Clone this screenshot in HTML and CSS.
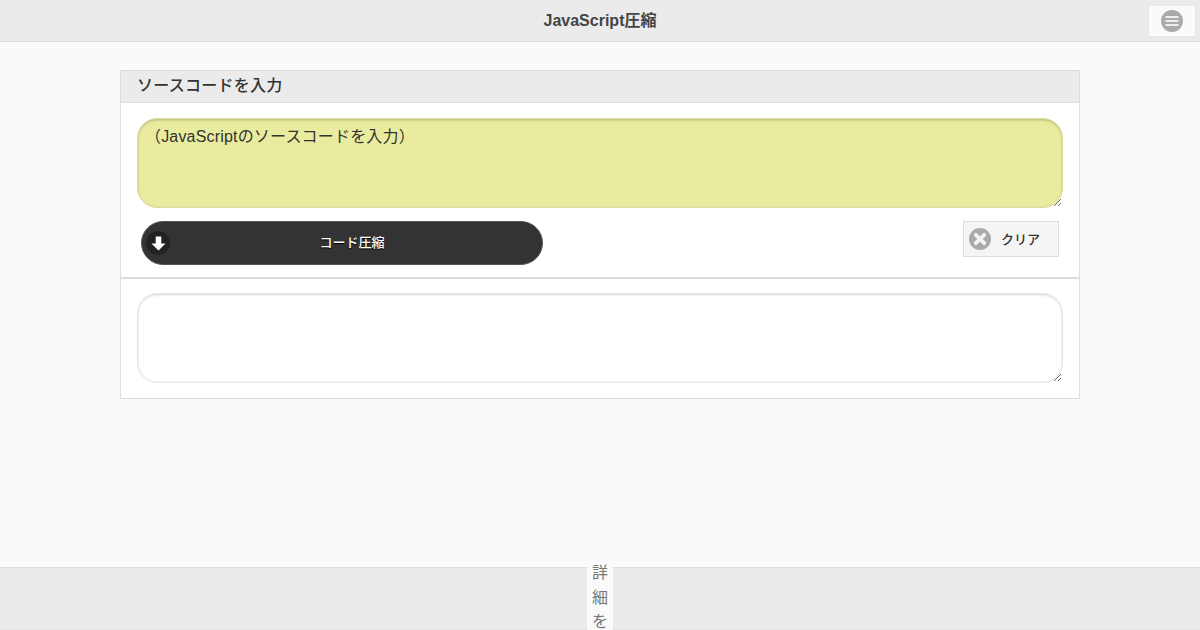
FILE: index.html
```html
<!DOCTYPE html>
<html lang="ja">
<head>
<meta charset="utf-8">
<title>JavaScript圧縮</title>
<link rel="stylesheet" href="styles.css">
</head>
<body>
<header class="topbar">
  <h1 class="title">JavaScript圧縮</h1>
  <button class="menu-btn" aria-label="menu">
    <svg width="22" height="22" viewBox="0 0 22 22"><circle cx="11" cy="11" r="11" fill="#aaa"/><path d="M4.5 7h13M4.5 11h13M4.5 15h13" stroke="#eee" stroke-width="2"/></svg>
  </button>
</header>
<main class="main">
  <section class="panel">
    <h2 class="panel-head">ソースコードを入力</h2>
    <div class="input-block">
      <textarea class="code code-in">（JavaScriptのソースコードを入力）</textarea>
      <div class="actions">
        <button class="run">
          <span class="run-icon">
            <svg width="15" height="15" viewBox="0 0 15 15"><path d="M4.7 0.5h5.6v7h4.2L7.5 14.5 0.5 7.5h4.2z" fill="#fff"/></svg>
          </span>
          <span class="run-label">コード圧縮</span>
        </button>
        <button class="clear">
          <svg width="22" height="22" viewBox="0 0 22 22"><circle cx="11" cy="11" r="11" fill="#aaa"/><path d="M6.8 6.8l8.4 8.4M15.2 6.8l-8.4 8.4" stroke="#f3f3f3" stroke-width="3.8" stroke-linecap="round"/></svg>
          <span class="clear-label">クリア</span>
        </button>
      </div>
    </div>
    <div class="output-block">
      <textarea class="code code-out"></textarea>
    </div>
  </section>
</main>
<footer class="footer">
  <div class="tab">詳<br>細<br>を</div>
</footer>
</body>
</html>
```

FILE: styles.css
```css
* { box-sizing: border-box; }
html, body { margin: 0; height: 100%; }
body {
  height: 630px;
  overflow: hidden;
  background: #fafafa;
  color: #222;
  font-family: "Liberation Sans", "Noto Sans CJK JP", sans-serif;
  display: flex;
  flex-direction: column;
}
.topbar {
  height: 42px;
  flex: none;
  background: #ebebeb;
  border-bottom: 1px solid #ddd;
  display: flex;
  align-items: center;
  justify-content: center;
  position: relative;
}
.title {
  margin: 0 0 4px;
  font-size: 16px;
  font-weight: bold;
  color: #444;
}
.menu-btn {
  position: absolute;
  top: 6px;
  right: 5px;
  width: 46px;
  height: 30px;
  padding: 0;
  border: 0;
  background: #fafafa;
  box-shadow: 0 0 3px #e2e2e2;
  display: flex;
  align-items: center;
  justify-content: center;
}
.main {
  flex: 1;
  padding-top: 28px;
}
.panel {
  width: 960px;
  margin: 0 auto;
  background: #fff;
  border: 1px solid #ddd;
}
.panel-head {
  margin: 0;
  height: 32px;
  padding: 0 16px;
  background: #ebebeb;
  border-bottom: 1px solid #ddd;
  font-size: 16px;
  font-weight: 500;
  letter-spacing: 0.25px;
  line-height: 30px;
  color: #333;
}
.input-block {
  padding: 15px 16px 12px;
  border-bottom: 2px solid #ddd;
}
.code {
  display: block;
  width: 100%;
  height: 90px;
  padding: 9px 7px;
  border: 1px solid #e6e6e6;
  border-radius: 20px;
  outline: 0;
  background: #fff;
  color: #333;
  font-family: "Liberation Sans", "Noto Sans CJK JP", sans-serif;
  font-size: 16px;
  line-height: 18px;
  box-shadow: inset 0 2px 2px rgba(0, 0, 0, 0.07), inset 0 0 2px rgba(0, 0, 0, 0.14);
}
.code-in {
  background: #e9ec9e;
  border-color: #dcdf9f;
  letter-spacing: 0.18px;
  box-shadow: inset 0 2px 2px rgba(0, 0, 0, 0.12), inset 0 0 2px rgba(0, 0, 0, 0.14);
}
.actions {
  display: flex;
  justify-content: space-between;
  align-items: flex-start;
  margin-top: 13px;
  padding: 0 4px;
}
.run {
  width: 402px;
  height: 44px;
  padding: 0;
  border: 1px solid #555;
  border-radius: 22px;
  background: #333;
  color: #fff;
  font: inherit;
  font-size: 13px;
  font-weight: 500;
  text-shadow: 0 1px 1px #000;
  display: flex;
  align-items: center;
  position: relative;
}
.run-icon {
  position: absolute;
  left: 4px;
  top: 9px;
  width: 24px;
  height: 24px;
  border-radius: 50%;
  background: #222;
  display: flex;
  align-items: center;
  justify-content: center;
}
.run-label {
  flex: 1;
  text-align: center;
  padding: 0 0 4px 20px;
}
.clear {
  width: 96px;
  height: 36px;
  padding: 0 0 0 5px;
  border: 1px solid #ddd;
  background: #f5f5f5;
  color: #333;
  font: inherit;
  font-size: 13px;
  font-weight: 500;
  display: flex;
  align-items: center;
}
.clear-label {
  margin-left: 10px;
  padding-bottom: 1px;
}
.output-block {
  padding: 14px 16px 15px;
}
.footer {
  height: 63px;
  flex: none;
  background: #ebebeb;
  border-top: 1px solid #ddd;
  border-bottom: 1px solid #e3e3e3;
  display: flex;
  justify-content: center;
}
.tab {
  width: 26px;
  margin-top: -7px;
  background: #fafafa;
  color: #777;
  font-size: 16px;
  line-height: 24.5px;
  text-align: center;
  flex: none;
  height: 82px;
}
```
